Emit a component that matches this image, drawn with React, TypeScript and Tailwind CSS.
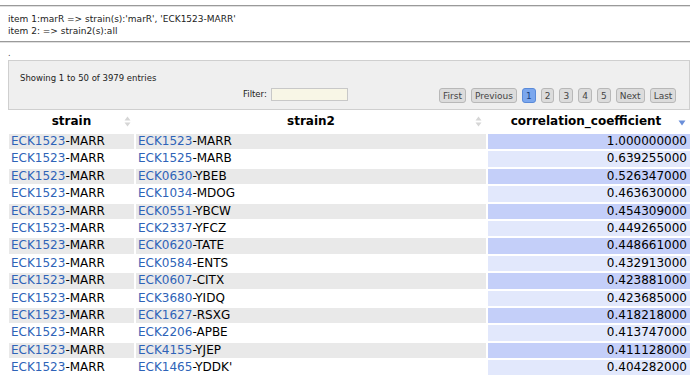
import React from "react";

const rows: [string, string, string, string, string][] = [
  ["ECK1523", "-MARR", "ECK1523", "-MARR", "1.000000000"],
  ["ECK1523", "-MARR", "ECK1525", "-MARB", "0.639255000"],
  ["ECK1523", "-MARR", "ECK0630", "-YBEB", "0.526347000"],
  ["ECK1523", "-MARR", "ECK1034", "-MDOG", "0.463630000"],
  ["ECK1523", "-MARR", "ECK0551", "-YBCW", "0.454309000"],
  ["ECK1523", "-MARR", "ECK2337", "-YFCZ", "0.449265000"],
  ["ECK1523", "-MARR", "ECK0620", "-TATE", "0.448661000"],
  ["ECK1523", "-MARR", "ECK0584", "-ENTS", "0.432913000"],
  ["ECK1523", "-MARR", "ECK0607", "-CITX", "0.423881000"],
  ["ECK1523", "-MARR", "ECK3680", "-YIDQ", "0.423685000"],
  ["ECK1523", "-MARR", "ECK1627", "-RSXG", "0.418218000"],
  ["ECK1523", "-MARR", "ECK2206", "-APBE", "0.413747000"],
  ["ECK1523", "-MARR", "ECK4155", "-YJEP", "0.411128000"],
  ["ECK1523", "-MARR", "ECK1465", "-YDDK'", "0.404282000"],
];

const SortBoth = () => (
  <svg width="7" height="11" viewBox="0 0 7 11" className="block">
    <path d="M3.5 0.5 L6.5 4.5 L0.5 4.5 Z" fill="#d6d6d6" />
    <path d="M3.5 10.5 L6.5 6.5 L0.5 6.5 Z" fill="#d6d6d6" />
  </svg>
);

const SortDesc = () => (
  <svg width="8" height="6" viewBox="0 0 8 6" className="block">
    <path d="M0.5 0.5 L7.5 0.5 L4 5.5 Z" fill="#6b8fd9" />
  </svg>
);

function Btn({ label, active }: { label: string; active?: boolean }) {
  return (
    <div
      className={
        active
          ? "h-[15px] px-[3px] rounded-[3px] border border-[#5a8ad8] bg-[#7ba7ee] text-[#1a3f80] text-[9px] leading-[12px] flex items-center"
          : "h-[15px] px-[3px] rounded-[3px] border border-[#b8b8b8] bg-[#dcdcdc] text-[#444] text-[9px] leading-[12px] flex items-center"
      }
    >
      {label}
    </div>
  );
}

export default function App() {
  return (
    <div
      className="w-[700px] h-[381px] bg-white overflow-hidden text-black"
      style={{ fontFamily: '"DejaVu Sans", Verdana, sans-serif' }}
    >
      <div className="pt-[5px] pr-[10px]">
        <div className="h-[2px] border-t border-[#9a9a9a] border-b border-b-[#e0e0e0]" />
        <div className="pl-[8px] pt-[6px] text-[9px] leading-[12px] text-[#222]">
          <div>item 1:marR =&gt; strain(s):'marR', 'ECK1523-MARR'</div>
          <div>item 2: =&gt; strain2(s):all</div>
        </div>
        <div className="mt-[4px] h-[2px] border-t border-[#9a9a9a] border-b border-b-[#e0e0e0]" />
        <div className="pl-[8px] h-[17px] text-[8px] leading-[22px] text-[#444]">.</div>
        <div className="ml-[8px] h-[50px] border border-[#cfcfcf] bg-[#efefef] relative">
          <div className="absolute left-[11px] top-[11px] text-[8.5px] leading-[12px] text-[#222]">
            Showing 1 to 50 of 3979 entries
          </div>
          <div className="absolute left-[234px] top-[27px] flex items-center gap-[4px]">
            <span className="text-[8.5px] text-[#222]">Filter:</span>
            <div className="w-[77px] h-[13px] border border-[#c8c8c8] bg-[#f8f6e6]" />
          </div>
          <div className="absolute left-[430px] top-[27px] flex items-center gap-[5px]">
            <Btn label="First" />
            <Btn label="Previous" />
            <Btn label="1" active />
            <Btn label="2" />
            <Btn label="3" />
            <Btn label="4" />
            <Btn label="5" />
            <Btn label="Next" />
            <Btn label="Last" />
          </div>
        </div>
        <div className="ml-[9px] mt-[1px] grid grid-cols-[125px_350px_202px] gap-x-[2px]">
          <div className="h-[20px] flex items-center justify-center relative text-[12px] font-bold">
            strain
            <span className="absolute right-[3px] top-[5px]"><SortBoth /></span>
          </div>
          <div className="h-[20px] flex items-center justify-center relative text-[12px] font-bold">
            strain2
            <span className="absolute right-[4px] top-[5px]"><SortBoth /></span>
          </div>
          <div className="h-[20px] flex items-center justify-center relative text-[12px] font-bold pr-[6px]">
            correlation_coefficient
            <span className="absolute right-[4px] top-[9px]"><SortDesc /></span>
          </div>
        </div>
        <div className="ml-[9px] mt-[3px] grid grid-cols-[125px_350px_202px] gap-x-[2px] gap-y-[2px] text-[12px]">
          {rows.map((r, i) => {
            const odd = i % 2 === 0;
            const base = odd ? "bg-[#e9e9e9]" : "bg-white";
            const sorted = odd ? "bg-[#c4cff9]" : "bg-[#e2e8fc]";
            return (
              <React.Fragment key={i}>
                <div className={`h-[15.4px] leading-[15.4px] pl-[2px] whitespace-nowrap ${base}`}>
                  <span className="text-[#2e63b8]">{r[0]}</span>
                  <span>{r[1]}</span>
                </div>
                <div className={`h-[15.4px] leading-[15.4px] pl-[2px] whitespace-nowrap ${base}`}>
                  <span className="text-[#2e63b8]">{r[2]}</span>
                  <span>{r[3]}</span>
                </div>
                <div className={`h-[15.4px] leading-[15.4px] pr-[3px] text-right ${sorted}`}>
                  {r[4]}
                </div>
              </React.Fragment>
            );
          })}
        </div>
      </div>
    </div>
  );
}
